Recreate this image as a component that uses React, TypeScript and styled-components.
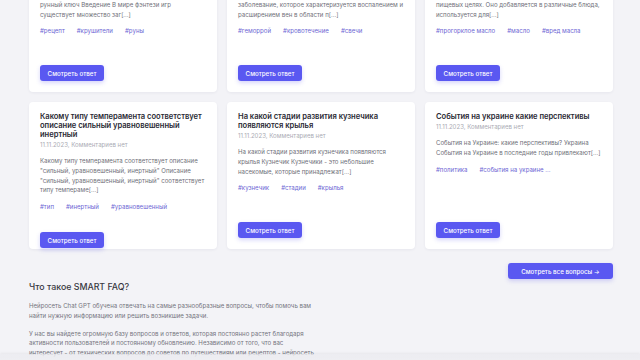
import React from "react";
import styled, { createGlobalStyle } from "styled-components";

const Global = createGlobalStyle`
  html, body { margin: 0; padding: 0; background: #f3f3f7; overflow: hidden; }
  body { font-family: Inter, "Noto Sans", sans-serif; -webkit-font-smoothing: antialiased; }
  * { box-sizing: border-box; }
`;

const Page = styled.main`
  width: 584px;
  margin: -55px 0 0 29px;
  display: flex;
  flex-direction: column;
`;

const Grid = styled.section`
  display: grid;
  grid-template-columns: repeat(3, 188px);
  grid-auto-rows: 147px;
  gap: 10px;
`;

const Card = styled.article`
  height: 147px;
  background: #ffffff;
  border-radius: 4px;
  box-shadow: 0 1px 3px rgba(40, 40, 80, 0.06);
  padding: 10px 11px 11px;
  display: flex;
  flex-direction: column;
`;

const Title = styled.h3`
  margin: 0;
  font-size: 7.6px;
  line-height: 9px;
  font-weight: 600;
  letter-spacing: -0.03px;
  color: #2a2a34;
`;

const Line = styled.span`
  display: block;
  white-space: nowrap;
`;

const Meta = styled.div`
  margin-top: 1px;
  font-size: 6.1px;
  line-height: 10px;
  color: #ababb4;
`;

const Desc = styled.p`
  margin: 6px 0 0;
  font-size: 6.1px;
  line-height: 9.75px;
  color: #6f6f79;
`;

const Tags = styled.div`
  margin-top: 7px;
  margin-bottom: 20px;
  display: flex;
  gap: 12px;
  font-size: 6.1px;
  line-height: 10px;
  color: #6d66d4;
  white-space: nowrap;
`;

const Button = styled.button<{ $wide?: boolean }>`
  margin-top: auto;
  align-self: ${(p) => (p.$wide ? "flex-end" : "flex-start")};
  height: 16px;
  width: ${(p) => (p.$wide ? "105px" : "64px")};
  padding: 0;
  border: none;
  border-radius: 3px;
  background: #5a58f1;
  box-shadow: 0 2px 4px rgba(90, 88, 241, 0.25);
  color: #ffffff;
  font-family: Inter, "Noto Sans", sans-serif;
  font-size: 6.2px;
  font-weight: 500;
  cursor: pointer;
  flex-shrink: 0;
`;

const AllRow = styled.div`
  margin-top: 14px;
  display: flex;
  justify-content: flex-end;
`;

const About = styled.section`
  display: flex;
  flex-direction: column;
`;

const AboutTitle = styled.h2`
  margin: 2px 0 0;
  font-size: 8.8px;
  line-height: 12px;
  font-weight: 500;
  color: #383842;
`;

const AboutText = styled.p<{ $first?: boolean }>`
  margin: ${(p) => (p.$first ? "8px" : "8px")} 0 0;
  font-size: 6.1px;
  line-height: 9.75px;
  color: #74747e;
`;

const BottomFade = styled.div`
  position: fixed;
  left: 0;
  right: 0;
  bottom: 0;
  height: 6px;
  background: linear-gradient(to bottom, rgba(234, 234, 239, 0.75), rgba(237, 237, 241, 0.95));
  box-shadow: 0 -1px 3px rgba(0, 0, 0, 0.05);
`;

type CardData = { title: string[]; desc: string[]; tags: string[] };

const DATE = "11.11.2023, Комментариев нет";

const cards: CardData[] = [
  {
    title: ["Крушители рун: рецепт и", "применение в игре"],
    desc: ["Крушители рун — как найти и создать", "рунный ключ Введение В мире фэнтези игр", "существует множество заг[...]"],
    tags: ["#рецепт", "#крушители", "#руны"],
  },
  {
    title: ["Геморрой: причины, симптомы", "и методы лечения"],
    desc: ["Геморрой — это распространенное", "заболевание, которое характеризуется воспалением и", "расширением вен в области п[...]"],
    tags: ["#геморрой", "#кровотечение", "#свечи"],
  },
  {
    title: ["Чем вредно прогорклое", "масло"],
    desc: ["Масло широко применяется в", "пищевых целях. Оно добавляется в различные блюда,", "используется для[...]"],
    tags: ["#прогорклое масло", "#масло", "#вред масла"],
  },
  {
    title: ["Какому типу темперамента соответствует", "описание сильный уравновешенный", "инертный"],
    desc: [
      "Какому типу темперамента соответствует описание",
      "\"сильный, уравновешенный, инертный\" Описание",
      "\"сильный, уравновешенный, инертный\" соответствует",
      "типу темпераме[...]",
    ],
    tags: ["#тип", "#инертный", "#уравновешенный"],
  },
  {
    title: ["На какой стадии развития кузнечика", "появляются крылья"],
    desc: [
      "На какой стадии развития кузнечика появляются",
      "крылья Кузнечик Кузнечики - это небольшие",
      "насекомые, которые принадлежат[...]",
    ],
    tags: ["#кузнечик", "#стадии", "#крылья"],
  },
  {
    title: ["События на украине какие перспективы"],
    desc: ["События на Украине: какие перспективы? Украина", "События на Украине в последние годы привлекают[...]"],
    tags: ["#политика", "#события на украине ..."],
  },
];

function QuestionCard({ data }: { data: CardData }) {
  return (
    <Card>
      <Title>
        {data.title.map((l, i) => (
          <Line key={i}>{l}</Line>
        ))}
      </Title>
      <Meta>{DATE}</Meta>
      <Desc>
        {data.desc.map((l, i) => (
          <Line key={i}>{l}</Line>
        ))}
      </Desc>
      <Tags>
        {data.tags.map((t) => (
          <span key={t}>{t}</span>
        ))}
      </Tags>
      <Button>Смотреть ответ</Button>
    </Card>
  );
}

export default function App() {
  return (
    <>
      <Global />
      <Page>
        <Grid>
          {cards.map((c, i) => (
            <QuestionCard key={i} data={c} />
          ))}
        </Grid>
        <AllRow>
          <Button $wide>Смотреть все вопросы →</Button>
        </AllRow>
        <About>
          <AboutTitle>Что такое SMART FAQ?</AboutTitle>
          <AboutText $first>
            <Line>Нейросеть Chat GPT обучена отвечать на самые разнообразные вопросы, чтобы помочь вам</Line>
            <Line>найти нужную информацию или решить возникшие задачи.</Line>
          </AboutText>
          <AboutText>
            <Line>У нас вы найдете огромную базу вопросов и ответов, которая постоянно растет благодаря</Line>
            <Line>активности пользователей и постоянному обновлению. Независимо от того, что вас</Line>
            <Line>интересует - от технических вопросов до советов по путешествиям или рецептов - нейросеть</Line>
            <Line>готова помочь.</Line>
          </AboutText>
        </About>
      </Page>
      <BottomFade />
    </>
  );
}
